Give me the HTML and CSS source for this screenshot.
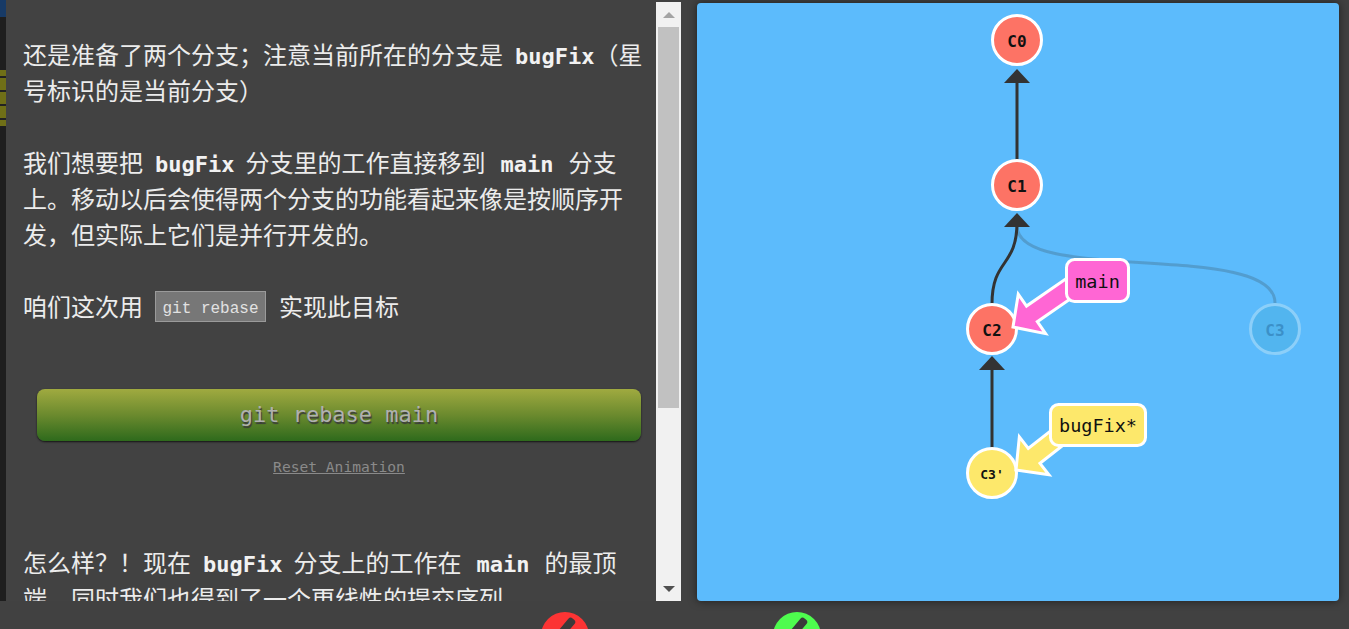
FILE: index.html
```html
<!DOCTYPE html>
<html lang="zh-CN">
<head>
<meta charset="utf-8">
<title>git rebase</title>
<link rel="stylesheet" href="styles.css">
</head>
<body>
<div class="page">
  <div class="top">
    <div class="edge">
      <div class="edge-blue"></div>
      <div class="edge-olive">
        <div class="edge-line"></div>
        <div class="edge-line"></div>
        <div class="edge-line"></div>
        <div class="edge-line"></div>
      </div>
    </div>
    <div class="dialog">
      <div class="content">
        <p class="para">还是准备了两个分支；注意当前所在的分支是<code class="kw kw-tight">bugFix</code>（星号标识的是当前分支）</p>
        <p class="para gap">我们想要把<code class="kw">bugFix</code>分支里的工作直接移到<code class="kw kw-wide">main</code>分支上。移动以后会使得两个分支的功能看起来像是按顺序开发，但实际上它们是并行开发的。</p>
        <p class="para gap">咱们这次用<span class="cmd">git rebase</span>实现此目标</p>
        <div class="demo-btn">git rebase main</div>
        <div class="reset-wrap"><span class="reset">Reset Animation</span></div>
        <p class="para gap-last">怎么样？！现在<code class="kw">bugFix</code>分支上的工作在<code class="kw kw-wide">main</code>的最顶端，同时我们也得到了一个更线性的提交序列。</p>
      </div>
    </div>
    <div class="scrollbar">
      <div class="sb-btn"><div class="sb-up"></div></div>
      <div class="sb-thumb"></div>
      <div class="sb-space"></div>
      <div class="sb-btn"><div class="sb-down"></div></div>
    </div>
    <div class="vis">
      <svg class="graph" width="642" height="598" viewBox="697 3 642 598" xmlns="http://www.w3.org/2000/svg">
        <!-- ghost edge C3 -> C1 -->
        <path d="M1275,303 C1275,240 1017,285 1017,226" fill="none" stroke="#333" stroke-width="3" opacity="0.22"/>
        <!-- C1 -> C0 -->
        <path d="M1017,160 L1017,80" fill="none" stroke="#333" stroke-width="3"/>
        <polygon points="1017,69 1004,83 1030,83" fill="#333"/>
        <!-- C2 -> C1 -->
        <path d="M992,304 C992,258 1017,268 1017,222" fill="none" stroke="#333" stroke-width="3"/>
        <polygon points="1017,213 1004,227 1030,227" fill="#333"/>
        <!-- C3' -> C2 -->
        <path d="M992,448 L992,366" fill="none" stroke="#333" stroke-width="3"/>
        <polygon points="992,356 979,370 1005,370" fill="#333"/>

        <!-- nodes -->
        <circle cx="1017" cy="40" r="24.5" fill="#fd7365" stroke="#fff" stroke-width="3"/>
        <text x="1017" y="41" class="node-t">C0</text>
        <circle cx="1017" cy="185" r="24.5" fill="#fd7365" stroke="#fff" stroke-width="3"/>
        <text x="1017" y="186" class="node-t">C1</text>
        <circle cx="992" cy="329" r="24.5" fill="#fd7365" stroke="#fff" stroke-width="3"/>
        <text x="992" y="330" class="node-t">C2</text>
        <circle cx="1275" cy="329" r="24.5" fill="#52b5ef" stroke="#8ccff9" stroke-width="3"/>
        <text x="1275" y="330" class="node-t ghost-t">C3</text>
        <circle cx="992" cy="473" r="24.5" fill="#fde86b" stroke="#fff" stroke-width="3"/>
        <text x="992" y="474" class="node-t small-t">C3'</text>

        <!-- main branch -->
        <polygon points="0,0 23,-24 23,-9.5 75,-9.5 75,9.5 23,9.5 23,24" transform="matrix(0.822,-0.569,0.569,0.822,1013,327)" fill="#ff66d4" stroke="#fff" stroke-width="3" stroke-linejoin="miter"/>
        <rect x="1066.5" y="259.5" width="62" height="42" rx="8" fill="#ff66d4" stroke="#fff" stroke-width="3"/>
        <text x="1097.5" y="281" class="branch-t">main</text>

        <!-- bugFix branch -->
        <polygon points="0,0 23,-24 23,-9.5 75,-9.5 75,9.5 23,9.5 23,24" transform="matrix(0.788,-0.616,0.616,0.788,1016,470)" fill="#fde86b" stroke="#fff" stroke-width="3" stroke-linejoin="miter"/>
        <rect x="1050.5" y="404.5" width="95" height="41" rx="8" fill="#fde86b" stroke="#fff" stroke-width="3"/>
        <text x="1098" y="425.5" class="branch-t">bugFix*</text>
      </svg>
    </div>
  </div>
  <div class="controls">
    <svg class="ctl" width="48" height="48" viewBox="0 0 48 48" xmlns="http://www.w3.org/2000/svg">
      <circle cx="24" cy="24" r="24" fill="#fc3434"/>
      <rect x="20" y="4" width="8" height="26" rx="3" fill="#3a3a3a" transform="rotate(40 24 17)"/>
    </svg>
    <svg class="ctl" width="48" height="48" viewBox="0 0 48 48" xmlns="http://www.w3.org/2000/svg">
      <circle cx="24" cy="24" r="24" fill="#4efc4e"/>
      <rect x="20" y="4" width="8" height="26" rx="3" fill="#3a3a3a" transform="rotate(40 24 17)"/>
    </svg>
  </div>
</div>
</body>
</html>
```

FILE: styles.css
```css
html, body {
  margin: 0;
  padding: 0;
}
body {
  background: #414141;
  width: 1349px;
  height: 629px;
  overflow: hidden;
}
.page {
  display: flex;
  flex-direction: column;
}
.top {
  display: flex;
  height: 601px;
}
.edge {
  width: 6px;
  background: #1e1e1e;
  display: flex;
  flex-direction: column;
}
.edge-blue {
  height: 17px;
  background: #173a66;
}
.edge-olive {
  margin-top: 53px;
  height: 56px;
  background: #6f6f17;
  display: flex;
  flex-direction: column;
  justify-content: space-around;
}
.edge-line {
  height: 2px;
  background: #222;
}
.dialog {
  width: 650px;
  height: 601px;
  background: #424242;
  overflow: hidden;
}
.content {
  padding: 36px 13px 0 17px;
  width: 620px;
  font-family: "Noto Sans CJK SC", "Noto Sans", sans-serif;
  font-size: 24px;
  line-height: 36px;
  color: #ececec;
}
.para {
  margin: 0;
}
.gap {
  margin-top: 36px;
}
.gap-last {
  margin-top: 67px;
}
.kw {
  font-family: "DejaVu Sans Mono", monospace;
  font-weight: bold;
  font-size: 22px;
  line-height: 1;
  color: #f2f2f2;
  margin: 0 11px 0 12px;
}
.kw-tight {
  margin-right: 0;
}
.kw-wide {
  margin: 0 15px;
}
.cmd {
  display: inline-block;
  vertical-align: top;
  overflow: hidden;
  font-family: "Liberation Mono", monospace;
  font-size: 16px;
  line-height: 34px;
  height: 29px;
  padding: 0 6.5px;
  margin: 3px 13px 0 12px;
  background: #777;
  border: 1px solid #9a9a9a;
  color: #e2e2e2;
}
.demo-btn {
  margin: 65px 0 0 14px;
  width: 604px;
  height: 52px;
  border-radius: 8px;
  background: linear-gradient(to bottom, #a0aa40 0%, #6b8a2e 50%, #2e6a1c 100%);
  box-shadow: 0 1px 2px rgba(0, 0, 0, 0.7);
  display: flex;
  align-items: center;
  justify-content: center;
  font-family: "DejaVu Sans Mono", monospace;
  font-size: 22px;
  line-height: 1;
  color: #b0b0b0;
  text-shadow: 1px 2px 1px #3a3a3a;
}
.reset-wrap {
  margin: 16px 0 0 14px;
  width: 604px;
  text-align: center;
  font-family: "DejaVu Sans Mono", monospace;
  font-size: 14.6px;
  line-height: 20px;
}
.reset {
  color: #8a8a8a;
  text-decoration: underline;
}
.scrollbar {
  width: 25px;
  height: 599px;
  margin-top: 2px;
  background: #f1f1f1;
  display: flex;
  flex-direction: column;
}
.sb-btn {
  height: 25px;
  display: flex;
  align-items: center;
  justify-content: center;
}
.sb-up {
  width: 0;
  height: 0;
  border-left: 6px solid transparent;
  border-right: 6px solid transparent;
  border-bottom: 6px solid #a3a3a3;
}
.sb-down {
  width: 0;
  height: 0;
  border-left: 6px solid transparent;
  border-right: 6px solid transparent;
  border-top: 6px solid #505050;
}
.sb-thumb {
  margin: 0 2px;
  height: 381px;
  background: #c1c1c1;
}
.sb-space {
  flex: 1;
}
.vis {
  margin: 3px 0 0 16px;
  width: 642px;
  height: 598px;
  border-radius: 4px;
  background: #5cbbfc;
  box-shadow: 0 0 8px rgba(0, 0, 0, 0.55);
  overflow: hidden;
}
.graph {
  display: block;
}
.node-t {
  font-family: "DejaVu Sans Mono", monospace;
  font-weight: bold;
  font-size: 16px;
  fill: #111;
  text-anchor: middle;
  dominant-baseline: central;
}
.small-t {
  font-size: 13px;
}
.ghost-t {
  fill: #3b90c8;
}
.branch-t {
  font-family: "DejaVu Sans Mono", monospace;
  font-size: 18.5px;
  fill: #111;
  text-anchor: middle;
  dominant-baseline: central;
}
.controls {
  display: flex;
  gap: 184px;
  padding-left: 541px;
  margin-top: 11px;
}
.ctl {
  display: block;
}
```
